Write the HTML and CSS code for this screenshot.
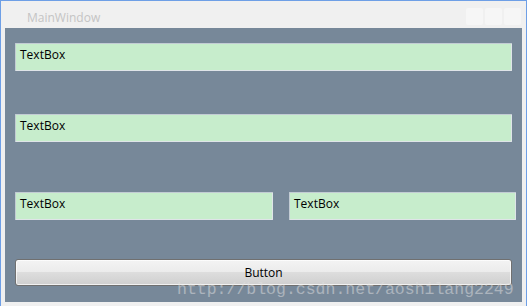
FILE: index.html
```html
<!DOCTYPE html>
<html lang="en">
<head>
    <meta charset="UTF-8">
    <title>MainWindow</title>
    <link rel="stylesheet" href="styles.css">
</head>
<body>
    <!-- Main window -->
    <div class="window">
        <div class="title-bar">
            <span class="title">MainWindow</span>
            <div class="caption-buttons">
                <span class="caption-btn"></span>
                <span class="caption-btn"></span>
                <span class="caption-btn"></span>
            </div>
        </div>

        <div class="client">
            <div class="textbox row-1">TextBox</div>
            <div class="textbox row-2">TextBox</div>
            <div class="split-row">
                <div class="textbox half-left">TextBox</div>
                <div class="textbox half-right">TextBox</div>
            </div>
            <button class="wpf-button">Button</button>
        </div>

        <div class="watermark">http://blog.csdn.net/aoshilang2249</div>
    </div>
</body>
</html>
```

FILE: styles.css
```css
/* WPF MainWindow mock */
body {
    margin: 0;
    background: #ffffff;
    font-family: "Open Sans", "Noto Sans", sans-serif;
}

.window {
    position: relative;
    width: 525px;
    height: 305px;
    background: #f0f0f0;
    border: 1px solid #6e9fe6;
    border-bottom: none;
    display: flex;
    flex-direction: column;
    overflow: hidden;
}

.title-bar {
    height: 27px;
    display: flex;
    align-items: flex-start;
    justify-content: space-between;
}

.title {
    margin: 9px 0 0 26px;
    font-size: 12px;
    line-height: 16px;
    color: #c4c4c4;
}

.caption-buttons {
    display: flex;
    gap: 2px;
    margin: 7px 5px 0 0;
}

.caption-btn {
    width: 17px;
    height: 17px;
    background: #f6f6f6;
    border-radius: 2px;
}

.client {
    margin: 0 4px;
    height: 274px;
    background: #778899;
    padding: 15px 0 0 10px;
    box-sizing: border-box;
    display: flex;
    flex-direction: column;
    align-items: flex-start;
}

.textbox {
    height: 28px;
    box-sizing: border-box;
    background: #c7edcc;
    border: 1px solid #c3ccd4;
    border-right-color: #dfe4e8;
    border-bottom-color: #dfe4e8;
    border-radius: 1px;
    padding: 3px 4px 0;
    font-size: 12px;
    line-height: 16px;
    color: #000;
}

.row-1 {
    width: 497px;
}

.row-2 {
    width: 497px;
    margin-top: 43px;
}

.split-row {
    display: flex;
    gap: 16px;
    margin-top: 50px;
}

.half-left {
    width: 258px;
}

.half-right {
    width: 227px;
}

.wpf-button {
    margin-top: 39px;
    width: 497px;
    height: 27px;
    border: 1px solid #707070;
    border-radius: 3px;
    background: linear-gradient(to bottom, #f3f3f3 0%, #ebebeb 50%, #dddddd 50%, #cfcfcf 100%);
    box-shadow: inset 0 0 0 1px rgba(255, 255, 255, 0.7);
    font-family: "Open Sans", "Noto Sans", sans-serif;
    font-size: 12px;
    line-height: 14px;
    color: #000;
    padding: 0;
}

/* blog watermark over the bottom right */
.watermark {
    position: absolute;
    left: 176px;
    top: 280px;
    font-family: "Liberation Mono", monospace;
    font-size: 16.5px;
    line-height: 17px;
    color: rgba(225, 225, 225, 0.5);
    white-space: nowrap;
}
```
